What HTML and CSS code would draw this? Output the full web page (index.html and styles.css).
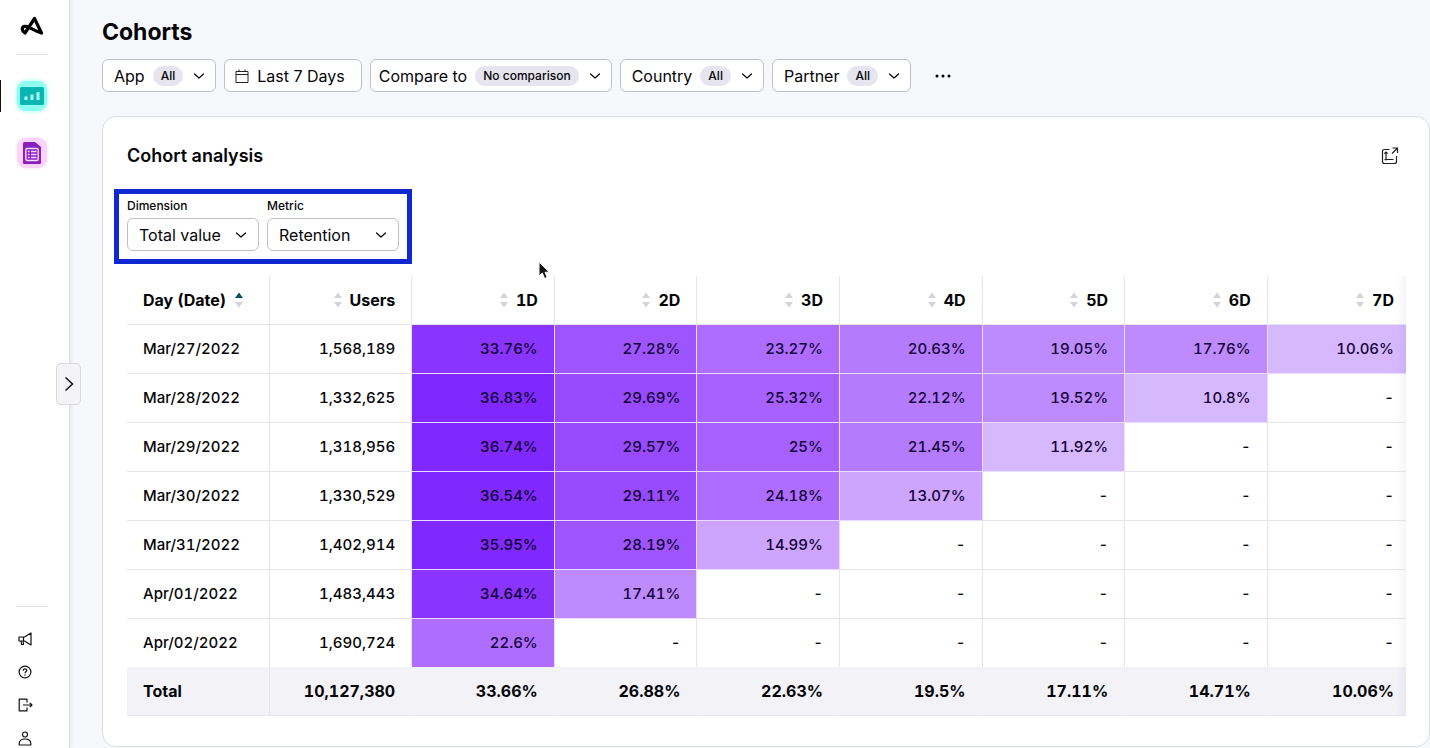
FILE: index.html
```html
<!DOCTYPE html>
<html lang="en">
<head>
<meta charset="utf-8">
<title>Cohorts</title>
<link rel="stylesheet" href="styles.css">
</head>
<body>
<svg class="defs" aria-hidden="true">
  <symbol id="chevron" viewBox="0 0 12 12"><path d="M1.500 4 6 8 10.500 4" fill="none" stroke="currentColor" stroke-width="1.200" stroke-linecap="round" stroke-linejoin="round"/></symbol>
  <symbol id="sort" viewBox="0 0 8 16"><path class="up" d="M4 0.500 8 6H0z"/><path class="down" d="M4 15.500 8 10H0z"/></symbol>
</svg>
<div class="app">
  <nav class="sidebar" aria-label="Main">
    <a class="logo" href="#" aria-label="Home">
      <svg width="24" height="20" viewBox="0 0 24 20" fill="none" stroke="#000" stroke-width="3.200" stroke-linejoin="round" stroke-linecap="round"><path d="M21.500 17 14.500 2.500 5 17C3 15.500 2 13.500 2.400 12 3 9.800 6.500 10 9 11.300 13 13.200 16.500 15.500 21.500 17z"/></svg>
    </a>
    <hr class="rule">
    <a class="tile tile-teal" href="#" aria-label="Dashboards" aria-current="page">
      <svg width="24" height="18" viewBox="0 0 24 18"><rect width="24" height="18" rx="1.500" fill="#0bb5b2"/><path d="M4.500 9.500h3V13h-3zM10.500 7.500h3V13h-3zM16.500 5h3v8h-3z" fill="#a8fff5"/></svg>
    </a>
    <a class="tile tile-violet" href="#" aria-label="Reports">
      <svg width="18" height="22" viewBox="0 0 18 22"><path d="M1.500 0H12l6 5v15.500q0 1.500-1.500 1.500h-15Q0 22 0 20.500v-19Q0 0 1.500 0z" fill="#8a1fc0"/><rect x="2.800" y="6.500" width="12.400" height="12" rx="1.500" fill="#8a1fc0" stroke="#ffdcff" stroke-width="1.400"/><path d="M4.800 9.500h1.800M8 9.500h5.500M4.800 12.500h1.800M8 12.500h5.500M4.800 15.500h1.800M8 15.500h5.500" stroke="#ffdcff" stroke-width="1.500"/></svg>
    </a>
    <div class="sidebar-foot">
      <hr class="rule">
      <a href="#" aria-label="News"><svg width="14" height="14" viewBox="0 0 14 14"><path d="M13 1v12L6.500 9H1V5h5.500zM3 9l.6 3.500h1.800L5.200 9M5.500 5v4"/></svg></a>
      <a href="#" aria-label="Help"><svg width="14" height="14" viewBox="0 0 14 14"><circle cx="7" cy="7" r="5.900"/><path d="M5.200 5.700C5.200 3.300 8.800 3.400 8.800 5.500 8.800 6.900 7 6.800 7 8.300M7 9.600v1.100"/></svg></a>
      <a href="#" aria-label="Log out"><svg width="15" height="14" viewBox="0 0 15 14"><path d="M9 4.500V1.200H1.200v11.600H9V9.500M5 7h9M11.800 4.800 14 7l-2.200 2.200"/></svg></a>
      <a href="#" aria-label="Account"><svg width="14" height="15" viewBox="0 0 14 15"><circle cx="7" cy="3.500" r="2.500"/><path d="M1.200 14v-1.500C1.200 9.500 3.500 8 7 8s5.800 1.500 5.800 4.500V14z"/></svg></a>
    </div>
    <button class="expand" type="button" aria-label="Expand menu"><svg width="10" height="16" viewBox="0 0 10 16"><path d="M1.500 1.500 8.500 8l-7 6.500" fill="none" stroke="#111" stroke-width="1.500"/></svg></button>
  </nav>
  <main class="main">
    <h1 class="page-title">Cohorts</h1>
    <div class="filters">
      <button class="filter" type="button">App <span class="pill">All</span><svg class="chevron"><use href="#chevron"/></svg></button>
      <button class="filter filter-date" type="button"><svg width="14" height="14" viewBox="0 0 14 14" fill="none" stroke="#222"><path d="M1 2.500h12v11H1zM1 5.500h12M4 .5v2M10 .5v2"/></svg>Last 7 Days</button>
      <button class="filter filter-compare" type="button">Compare to <span class="pill">No comparison</span><svg class="chevron"><use href="#chevron"/></svg></button>
      <button class="filter" type="button">Country <span class="pill">All</span><svg class="chevron"><use href="#chevron"/></svg></button>
      <button class="filter" type="button">Partner <span class="pill">All</span><svg class="chevron"><use href="#chevron"/></svg></button>
      <button class="more" type="button" aria-label="More filters"><svg width="16" height="4" viewBox="0 0 16 4"><circle cx="2" cy="2" r="1.500"/><circle cx="8" cy="2" r="1.500"/><circle cx="14" cy="2" r="1.500"/></svg></button>
    </div>
    <section class="card">
      <header class="card-head">
        <h2>Cohort analysis</h2>
        <button class="export" type="button" aria-label="Open report"><svg width="18" height="18" viewBox="0 0 18 18" fill="none" stroke="#222" stroke-width="1.200"><path d="M8.500 2.500h-5q-2 0-2 2v10q0 2 2 2h10q2 0 2-2V9M5 5v8.500M3.500 12.500h9M3.300 6.700 5 5l1.700 1.700M11.500 1h5v5M16.500 1 11 6.500"/></svg></button>
      </header>
      <div class="controls">
        <div class="field">
          <label for="dimension">Dimension</label>
          <div class="select"><select id="dimension"><option>Total value</option></select><svg class="chevron"><use href="#chevron"/></svg></div>
        </div>
        <div class="field">
          <label for="metric">Metric</label>
          <div class="select"><select id="metric"><option>Retention</option></select><svg class="chevron"><use href="#chevron"/></svg></div>
        </div>
      </div>
      <div class="table-wrap">
        <table class="cohorts">
          <thead>
            <tr><th scope="col">Day (Date)<svg class="sort sort-asc"><use href="#sort"/></svg></th><th scope="col"><svg class="sort"><use href="#sort"/></svg>Users</th><th scope="col"><svg class="sort"><use href="#sort"/></svg>1D</th><th scope="col"><svg class="sort"><use href="#sort"/></svg>2D</th><th scope="col"><svg class="sort"><use href="#sort"/></svg>3D</th><th scope="col"><svg class="sort"><use href="#sort"/></svg>4D</th><th scope="col"><svg class="sort"><use href="#sort"/></svg>5D</th><th scope="col"><svg class="sort"><use href="#sort"/></svg>6D</th><th scope="col"><svg class="sort"><use href="#sort"/></svg>7D</th></tr>
          </thead>
          <tbody>
            <tr><td>Mar/27/2022</td><td>1,568,189</td><td class="h9">33.76%</td><td class="h7">27.28%</td><td class="h5">23.27%</td><td class="h4">20.63%</td><td class="h3">19.05%</td><td class="h3">17.76%</td><td class="h1">10.06%</td></tr>
            <tr><td>Mar/28/2022</td><td>1,332,625</td><td class="h10">36.83%</td><td class="h8">29.69%</td><td class="h6">25.32%</td><td class="h4">22.12%</td><td class="h3">19.52%</td><td class="h1">10.8%</td><td>-</td></tr>
            <tr><td>Mar/29/2022</td><td>1,318,956</td><td class="h10">36.74%</td><td class="h8">29.57%</td><td class="h6">25%</td><td class="h4">21.45%</td><td class="h1">11.92%</td><td>-</td><td>-</td></tr>
            <tr><td>Mar/30/2022</td><td>1,330,529</td><td class="h10">36.54%</td><td class="h8">29.11%</td><td class="h5">24.18%</td><td class="h2">13.07%</td><td>-</td><td>-</td><td>-</td></tr>
            <tr><td>Mar/31/2022</td><td>1,402,914</td><td class="h10">35.95%</td><td class="h7">28.19%</td><td class="h2">14.99%</td><td>-</td><td>-</td><td>-</td><td>-</td></tr>
            <tr><td>Apr/01/2022</td><td>1,483,443</td><td class="h9">34.64%</td><td class="h3">17.41%</td><td>-</td><td>-</td><td>-</td><td>-</td><td>-</td></tr>
            <tr><td>Apr/02/2022</td><td>1,690,724</td><td class="h5">22.6%</td><td>-</td><td>-</td><td>-</td><td>-</td><td>-</td><td>-</td></tr>
          </tbody>
          <tfoot>
            <tr><td>Total</td><td>10,127,380</td><td>33.66%</td><td>26.88%</td><td>22.63%</td><td>19.5%</td><td>17.11%</td><td>14.71%</td><td>10.06%</td></tr>
          </tfoot>
        </table>
      </div>
    </section>
  </main>
</div>
<svg class="pointer" width="14" height="20" viewBox="0 0 14 20" aria-hidden="true"><path d="M2 1v14l3.300-3 2.300 5.500 2.600-1.100L8 11.200h4.300z" fill="#111" stroke="#fff"/></svg>
</body>
</html>
```
FILE: styles.css
```css
* { box-sizing: border-box; }

body {
  margin: 0;
  background: #f7f8fb;
  color: #050508;
  font: 16px/20px Inter, "Liberation Sans", sans-serif;
}

button, select { font: inherit; color: inherit; }
h1, h2 { margin: 0; }
.defs { position: absolute; width: 0; height: 0; }

.app { display: flex; min-height: 100vh; }

/* Sidebar */
.sidebar {
  position: sticky;
  top: 0;
  display: flex;
  flex: none;
  flex-direction: column;
  align-items: center;
  width: 70px;
  height: 100vh;
  padding: 16px 5px 0 0;
  background: #fff;
  border-right: 1px solid #dcdde2;
  box-shadow: 1px 0 4px rgba(40, 40, 80, .08);
}
.logo { display: flex; }
.rule { width: 32px; margin: 18px 0 0; border: 0; border-top: 1px solid #e2e2e6; }
.tile {
  display: flex;
  align-items: center;
  justify-content: center;
  width: 30px;
  height: 30px;
  border-radius: 9px;
}
.tile-teal { margin-top: 26px; background: #8ffcf2; box-shadow: 0 0 4px #8ffcf2; }
.tile-teal::before {
  content: "";
  position: absolute;
  left: 0;
  width: 1px;
  height: 32px;
  background: #111;
}
.tile-violet { margin-top: 27px; background: #fbd3ff; box-shadow: 0 0 3px #fbd3ff; }
.sidebar-foot {
  display: flex;
  flex-direction: column;
  gap: 19px;
  width: 32px;
  margin-top: auto;
  padding-bottom: 2px;
}
.sidebar-foot .rule { margin: 0 0 6px; }
.sidebar-foot a { display: flex; padding-left: 2px; }
.sidebar-foot svg { fill: none; stroke: #111; stroke-width: 1.2; stroke-linejoin: round; }
.expand {
  position: absolute;
  top: 363px;
  right: -12px;
  display: grid;
  place-items: center;
  width: 25px;
  height: 42px;
  padding: 0;
  background: #f4f4f8;
  border: 1px solid #d9d9e0;
  border-radius: 5px;
}

/* Page header */
.main { flex: 1; min-width: 0; padding: 18px 0 1px 32px; }
.page-title { font-size: 23px; line-height: 28px; font-weight: 700; }
.filters { display: flex; align-items: center; gap: 8px; margin-top: 13px; }
.filter {
  display: flex;
  align-items: center;
  gap: 8px;
  height: 33px;
  padding: 0 10px 0 11px;
  background: #fff;
  border: 1px solid #bfbfca;
  border-radius: 6px;
  white-space: nowrap;
}
.filter-date { padding: 0 16px 0 10px; }
.filter-compare { padding-left: 8px; }
.pill {
  margin-right: 2px;
  padding: 0 8px;
  background: #e5e4ef;
  border-radius: 10px;
  font-size: 12px;
  font-weight: 500;
}
.chevron { flex: none; width: 12px; height: 12px; }
.more { display: flex; margin-left: 8px; padding: 8px; background: none; border: 0; }

/* Card */
.card {
  margin-top: 24px;
  padding: 27px 23px 30px 24px;
  background: #fff;
  border: 1px solid #dbdde3;
  border-radius: 14px;
}
.card-head { display: flex; align-items: center; justify-content: space-between; }
.card-head h2 { font-size: 18px; line-height: 24px; font-weight: 600; }
.export { display: flex; padding: 0 7px 0 0; background: none; border: 0; }

.controls {
  display: flex;
  gap: 8px;
  width: max-content;
  margin: 21px 0 0 -13px;
  padding: 4px 8px 8px;
  border: 5px solid #1028cf;
}
.field { display: flex; flex-direction: column; gap: 4px; width: 132px; }
.field label { font-size: 12px; line-height: 16px; font-weight: 500; }
.select { display: grid; align-items: center; }
.select > * { grid-area: 1 / 1; }
.select select {
  appearance: none;
  width: 100%;
  height: 33px;
  padding: 0 32px 0 11px;
  background: #fff;
  border: 1px solid #bfbfca;
  border-radius: 6px;
}
.select .chevron { justify-self: end; margin-right: 12px; pointer-events: none; }

/* Table */
.table-wrap { position: relative; margin-top: 12px; }
.table-wrap::after {
  content: "";
  position: absolute;
  inset: 0 0 0 auto;
  width: 10px;
  background: linear-gradient(to right, transparent, rgba(60, 40, 90, .05));
}
.cohorts {
  width: 100%;
  table-layout: fixed;
  border-collapse: separate;
  border-spacing: 0;
  font-variant-numeric: tabular-nums;
}
.cohorts th, .cohorts td {
  height: 49px;
  padding: 0 16px;
  border-right: 1px solid #e6e6ea;
  border-bottom: 1px solid #e6e6ea;
  text-align: right;
  white-space: nowrap;
}
.cohorts th { width: 11.15%; font-weight: 700; }
.cohorts th:last-child { width: auto; }
.cohorts th:first-child, .cohorts td:first-child { text-align: left; }
.cohorts th:last-child, .cohorts td:last-child { padding-right: 12px; border-right: 0; }
.cohorts tbody td { font-size: 15px; font-weight: 500; }
.cohorts tbody tr:last-child td { height: 48px; border-bottom: 0; }
.cohorts tfoot td { background: #f2f2f7; border-right-color: transparent; font-weight: 700; }
.cohorts tfoot td:first-child { border-right-color: #e6e6ea; }
.cohorts td[class] { border-color: #eadcff; color: #140235; }
.sort {
  --up: #d3d3d8;
  --down: #d3d3d8;
  width: 8px;
  height: 16px;
  margin-right: 8px;
  vertical-align: -2px;
}
.sort-asc { --up: #0b4f5c; margin: 0 0 0 9px; }
.up { fill: var(--up); }
.down { fill: var(--down); }

.h1 { background: #d6b8ff; }
.h2 { background: #cda5ff; }
.h3 { background: #be8bff; }
.h4 { background: #b47bff; }
.h5 { background: #ae6dff; }
.h6 { background: #a761ff; }
.h7 { background: #9e55ff; }
.h8 { background: #984aff; }
.h9 { background: #8934ff; }
.h10 { background: #8029ff; }

.pointer { position: absolute; left: 537px; top: 261px; pointer-events: none; }
```
